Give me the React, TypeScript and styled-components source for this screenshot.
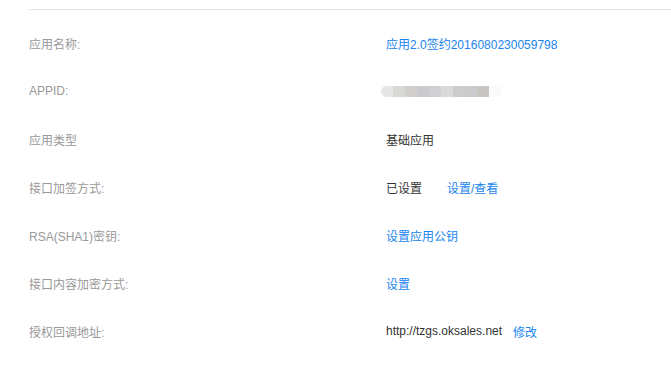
import React from 'react';
import styled, { createGlobalStyle } from 'styled-components';

const GlobalStyle = createGlobalStyle`
  body {
    margin: 0;
    background: #fff;
    font-family: "Liberation Sans", "Noto Sans CJK SC", sans-serif;
    font-size: 12px;
  }
`;

const Page = styled.div`
  padding: 9px 0 0 29px;
`;

const Divider = styled.div`
  border-top: 1px solid #e5e5e5;
  margin-bottom: 9px;
`;

const Row = styled.div`
  display: flex;
  align-items: center;
  height: 48px;
`;

const Label = styled.div`
  width: 357px;
  color: #999;
`;

const Value = styled.div`
  display: flex;
  align-items: center;
  color: #333;
`;

const Link = styled.a<{ $gap?: number }>`
  color: #1a84f0;
  text-decoration: none;
  cursor: pointer;
  margin-left: ${(p) => p.$gap ?? 0}px;
`;

const Mosaic = styled.div`
  display: flex;
  height: 11px;
  margin-left: -5px;
  filter: blur(0.4px);
`;

const Tile = styled.span<{ $first?: boolean }>`
  width: 12px;
  height: 11px;
  border-radius: ${(p) => (p.$first ? '6px 0 0 6px' : '0')};
`;

const mosaic = ['#e6e6e6', '#d8d8d4', '#d0cfcc', '#cbcad0', '#d0cfd2', '#dadada', '#cdcccc', '#cbcacc', '#c8c6c3', '#f9fafc'];

const App: React.FC = () => {
  return (
    <Page>
      <GlobalStyle />
      <Divider />
      <Row>
        <Label>应用名称:</Label>
        <Value>
          <Link>应用2.0签约2016080230059798</Link>
        </Value>
      </Row>
      <Row>
        <Label>APPID:</Label>
        <Value>
          <Mosaic>
            {mosaic.map((c, i) => (
              <Tile key={i} $first={i === 0} style={{ background: c }} />
            ))}
          </Mosaic>
        </Value>
      </Row>
      <Row>
        <Label>应用类型</Label>
        <Value>基础应用</Value>
      </Row>
      <Row>
        <Label>接口加签方式:</Label>
        <Value>
          已设置
          <Link $gap={25}>设置/查看</Link>
        </Value>
      </Row>
      <Row>
        <Label>RSA(SHA1)密钥:</Label>
        <Value>
          <Link>设置应用公钥</Link>
        </Value>
      </Row>
      <Row>
        <Label>接口内容加密方式:</Label>
        <Value>
          <Link>设置</Link>
        </Value>
      </Row>
      <Row>
        <Label>授权回调地址:</Label>
        <Value>
          http://tzgs.oksales.net
          <Link $gap={11}>修改</Link>
        </Value>
      </Row>
    </Page>
  );
};

export default App;
